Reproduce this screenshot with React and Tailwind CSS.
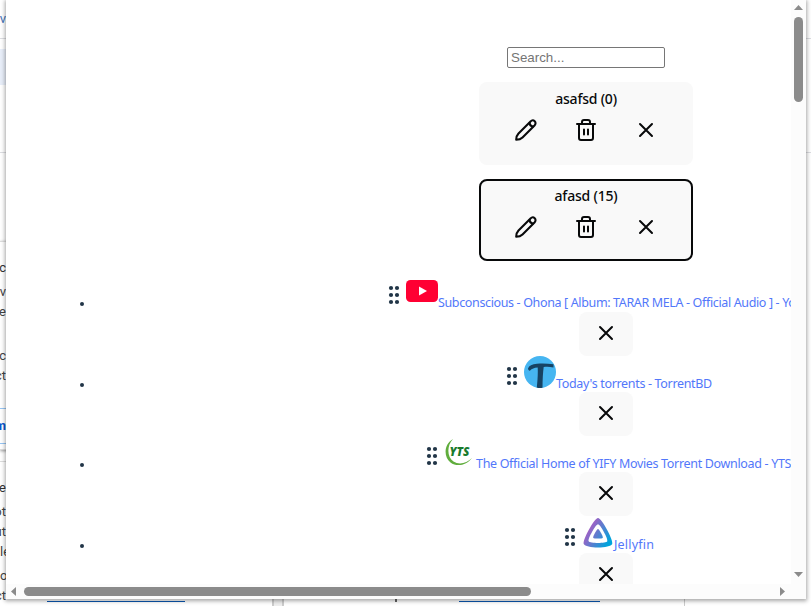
import React from 'react';

const ui = "font-['Noto_Sans',sans-serif]";

function Cross() {
  return (
    <svg width="24" height="24" viewBox="0 0 24 24" fill="none" stroke="#08090a" strokeWidth="2" strokeLinecap="round">
      <path d="M6 6l12 12M18 6L6 18" />
    </svg>
  );
}

function Pencil() {
  return (
    <svg width="24" height="24" viewBox="0 0 24 24" fill="none" stroke="#08090a" strokeWidth="2.100" strokeLinejoin="round">
      <path d="M2.200 21.800c0-2.700.5-4.500 2.300-6.300L16.500 3.400c1.300-1.300 3-1.400 4.200-.2s1.100 3-.2 4.300L8.500 19.500C6.700 21.300 5 21.800 2.200 21.800z" />
      <path d="M15.500 4.400c.1 2.300 1.600 4 4 4.200" />
    </svg>
  );
}

function Trash() {
  return (
    <svg width="24" height="24" viewBox="0 0 24 24" fill="none" stroke="#08090a" strokeWidth="2" strokeLinecap="round" strokeLinejoin="round">
      <path d="M3 6h18M5 6v14c0 1.200.8 2 2 2h10c1.200 0 2-.8 2-2V6M8 6V4c0-1.200.8-2 2-2h4c1.200 0 2 .8 2 2v2M10 11.500v5M14 11.500v5" />
    </svg>
  );
}

function Grip() {
  return (
    <svg className="shrink-0" width="24" height="24" viewBox="0 0 24 24" fill="#213547">
      {[5, 12, 19].map((y) => (
        <g key={y}>
          <circle cx="9" cy={y} r="2.100" />
          <circle cx="15" cy={y} r="2.100" />
        </g>
      ))}
    </svg>
  );
}

function YouTube() {
  return (
    <svg className="shrink-0" width="32" height="32" viewBox="0 0 32 32">
      <rect y="5" width="32" height="22" rx="4.500" fill="#ff0033" />
      <path d="M13 11.500v9l8-4.500z" fill="#fff" />
    </svg>
  );
}

function TorrentBD() {
  return (
    <svg className="shrink-0" width="32" height="32" viewBox="0 0 32 32">
      <circle cx="16" cy="16" r="16" fill="#46b5f1" />
      <path d="M4 12.500C5 9.500 8 8 13 7.700c6-.4 11-.1 16.500.5v3.200c-3.500-.6-6.500-.7-9.800-.4-.8 6-1.100 12-1.200 20.800-2 .5-4 .4-5.700-.2.800-8 1.200-14 .9-20-3.700.3-5.700 1-7.800 3.200-1.100-.3-1.800-1.100-1.900-2.300z" fill="#174263" />
    </svg>
  );
}

function Yts() {
  return (
    <svg className="shrink-0" width="32" height="32" viewBox="0 0 32 32">
      <path d="M9 3C0 8-.8 20.500 6.500 26.500c6.500 5 16.500 2.500 21.500-4.500-5.500 5.500-13 7-18.500 3.500C3 21 2.500 10 9 3z" fill="#60ad3d" />
      <text x="5.500" y="20" textLength="20" lengthAdjust="spacingAndGlyphs" fontFamily="Open Sans" fontWeight="800" fontStyle="italic" fontSize="13" fill="#197b2d">YTS</text>
    </svg>
  );
}

function Jellyfin() {
  return (
    <svg className="shrink-0" width="32" height="32" viewBox="0 0 32 32">
      <defs>
        <linearGradient id="jelly" x1="5" y1="12" x2="27" y2="25" gradientUnits="userSpaceOnUse">
          <stop offset="0" stopColor="#aa5cc3" />
          <stop offset="1" stopColor="#00a4dc" />
        </linearGradient>
      </defs>
      <path fill="url(#jelly)" fillRule="evenodd" d="M16 1c3.600 0 15.900 22.500 14.200 26-1.700 4.600-26.700 4.600-28.400 0C.1 23.500 12.400 1 16 1zm0 6.200c-2.300 0-10.400 14.700-9.300 17 1.100 2.300 17.500 2.300 18.600 0S18.300 7.200 16 7.200z" />
      <path fill="url(#jelly)" d="M16 12c1.200 0 5.300 7.500 4.800 8.700-.6 1.200-9 1.200-9.600 0C10.700 19.500 14.800 12 16 12z" />
    </svg>
  );
}

function Group({ title, active }) {
  return (
    <div className={active
      ? 'flex h-[82px] w-[214px] flex-col items-center rounded-lg border-2 border-[#08090a] bg-[#f9f9f9] pt-[5px]'
      : 'flex h-[83px] w-[214px] flex-col items-center rounded-lg bg-[#f9f9f9] pt-[7px]'}>
      <div className={`h-[19px] whitespace-nowrap text-[14px] font-medium leading-[19px] tracking-[-0.2px] text-[#08090a] ${ui}`}>{title}</div>
      <div className="mt-[10px] flex gap-9">
        <Pencil />
        <Trash />
        <Cross />
      </div>
    </div>
  );
}

const links = [
  { icon: YouTube, row: 'h-[81px]', gap: 'mt-[5px]', width: 'w-[392px]', track: 'tracking-[-0.36px]', title: 'Subconscious - Ohona [ Album: TARAR MELA - Official Audio ] - YouTube' },
  { icon: TorrentBD, row: 'h-20', gap: 'mt-1', width: 'w-[156px]', track: 'tracking-[-0.33px]', title: "Today's torrents - TorrentBD" },
  { icon: Yts, row: 'h-[81px]', gap: 'mt-1', width: 'w-[316px]', track: 'tracking-[-0.325px]', title: 'The Official Home of YIFY Movies Torrent Download - YTS' },
  { icon: Jellyfin, row: 'h-20', gap: 'mt-1', width: 'w-[40px]', track: 'tracking-[0.2px]', title: 'Jellyfin' },
];

function LinkRow({ icon: Icon, row, gap, width, track, title }) {
  return (
    <li className={`flex ${row}`}>
      <span className="-ml-4 mt-[27px] size-1 shrink-0 rounded-full bg-[#213547]" />
      <div className="flex grow flex-col items-center pl-3">
        <div className="flex h-8 items-end">
          <Grip />
          <Icon />
          <a className={`h-[18px] translate-y-[5px] whitespace-nowrap text-[12.500px] leading-[18px] text-[#5277fa] ${width} ${track} ${ui}`}>{title}</a>
        </div>
        <div className={`flex h-11 w-[54px] shrink-0 justify-center rounded-lg bg-[#f9f9f9] pt-[9px] ${gap}`}>
          <Cross />
        </div>
      </div>
    </li>
  );
}

function Arrow({ d }) {
  return (
    <svg className="shrink-0" width="15" height="15" viewBox="0 0 15 15" fill="#8b8b8b">
      <path d={d} />
    </svg>
  );
}

const fragments = [
  ['v', 'mt-[9px] justify-end text-[#4472b8]'],
  ['c', 'mt-[229px] justify-end text-[#333]'],
  ['v', 'mt-[4px] justify-end text-[#444]'],
  ['e', 'mt-0 justify-end text-[#444]'],
  ['nc', 'mt-[24px] justify-end text-[#444]'],
  ['ct', 'mt-0 justify-end text-[#444]'],
  ['m', 'mt-[30px] justify-end font-bold text-[#0b57d0]'],
  ['e', 'mt-[42px] justify-end text-[#333]'],
  ['ot', 'mt-[4px] justify-end text-[#444]'],
  ['ut', 'mt-0 justify-end text-[#444]'],
  ['le', 'mt-0 justify-start text-[#444]'],
  ['o', 'mt-[4px] justify-start text-[#444]'],
  ['ct', 'mt-0 justify-end text-[#444]'],
];

function PageBehind() {
  return (
    <div className="relative h-full w-full bg-white">
      <div className="flex h-full flex-col">
        <div className="h-[38px] shrink-0" />
        <div className="h-[115px] shrink-0 border-y border-[#dcdde1] pt-[10px]">
          <div className="h-9 w-1.5 bg-[#e8eef9]" />
        </div>
        <div className="h-[88px] shrink-0" />
        <div className="h-[209px] w-[684px] shrink-0 border-y border-[#ddd] pt-[166px] shadow-[0_1px_3px_rgba(0,0,0,0.4)]">
          <div className="h-9 border-y border-[#96c5f4]" />
        </div>
        <div className="mt-[11px] w-[684px] grow border-t border-[#ddd]" />
      </div>
      <div className="absolute left-0 top-0 flex h-full w-1.5 flex-col overflow-hidden">
        {fragments.map(([t, c], i) => (
          <span key={i} className={`flex h-5 w-1.5 shrink-0 text-[13px] leading-5 font-['Roboto',sans-serif] ${c}`}>{t}</span>
        ))}
      </div>
      <div className="absolute bottom-0 left-0 flex h-[7px] w-full items-start">
        <div className="ml-[47px] mt-[2px] h-px w-[138px] bg-[#0b57b0]" />
        <div className="ml-[87px] h-[7px] w-3 border-x-2 border-[#ccc] bg-[#eee]" />
        <div className="ml-[111px] h-[3px] w-0.5 bg-[#666]" />
        <div className="ml-[62px] mt-[2px] h-px w-[141px] bg-[#0b57b0]" />
        <div className="ml-[84px] h-[7px] w-px bg-[#ccc]" />
      </div>
    </div>
  );
}

export default function App() {
  return (
    <div className="relative h-[606px] w-[811px] overflow-hidden bg-white">
      <PageBehind />
      <div className="absolute left-1.5 top-0 flex h-[599px] w-[800px] flex-col bg-white shadow-[0_1px_4px_1px_rgba(0,0,0,0.35)]">
        <div className="flex h-[584px]">
          <div className="w-[785px] overflow-hidden">
            <div className="flex w-[1160px] flex-col items-center px-[50px] pt-[47px]">
              <input placeholder="Search..." className="h-[21px] w-[158px] rounded-[2px] border border-[#767676] bg-white px-[3px] font-['Liberation_Sans',sans-serif] text-[13.333px] leading-[15px] placeholder:text-[#757575]" />
              <div className="mt-[14px] flex flex-col gap-[14px]">
                <Group title="asafsd (0)" />
                <Group title="afasd (15)" active />
              </div>
              <ul className="mt-[14px] w-full pl-10">
                {links.map((link) => <LinkRow key={link.title} {...link} />)}
              </ul>
            </div>
          </div>
          <div className="flex w-[15px] flex-col items-center bg-[#fcfcfc]">
            <Arrow d="M7.500 5L12 10H3z" />
            <div className="mt-[2px] h-[85px] w-[9px] rounded-full bg-[#8b8b8b]" />
            <div className="grow" />
            <Arrow d="M3 3h9L7.500 8z" />
          </div>
        </div>
        <div className="flex h-[15px] items-center bg-[#fcfcfc]">
          <Arrow d="M10 3v9L5 7.500z" />
          <div className="ml-[3px] h-[9px] w-[507px] rounded-full bg-[#8b8b8b]" />
          <div className="grow" />
          <Arrow d="M4 3v9l5-4.500z" />
          <div className="w-[15px]" />
        </div>
      </div>
    </div>
  );
}
